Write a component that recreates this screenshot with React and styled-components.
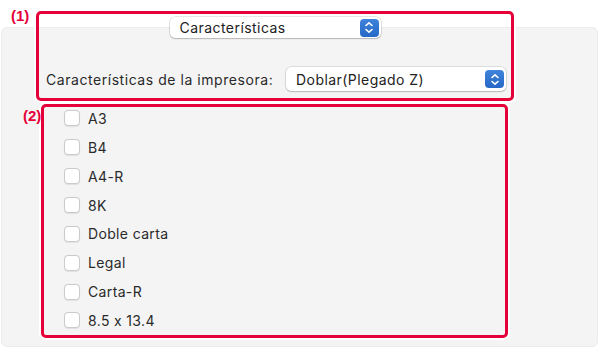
import styled, { createGlobalStyle } from 'styled-components';

const GlobalStyle = createGlobalStyle`
	html, body {
		margin: 0;
		padding: 0;
		background: #ffffff;
		font-family: Inter, "Liberation Sans", Arial, sans-serif;
		font-feature-settings: "calt" 0;
	}
`;

const sizes = ['A3', 'B4', 'A4-R', '8K', 'Doble carta', 'Legal', 'Carta-R', '8.5 x 13.4'];

const Stepper = () => (
	<StepperBox>
		<svg width='10' height='13' viewBox='0 0 10 13' fill='none'>
			<path
				d='M2 4.5 L5 1.8 L8 4.5 M2 8.5 L5 11.2 L8 8.5'
				stroke='#fff'
				strokeWidth='1.6'
				strokeLinecap='round'
				strokeLinejoin='round'
			/>
		</svg>
	</StepperBox>
);

const App = () => {
	return (
		<>
			<GlobalStyle />
			<Page>
				<Panel>
					<Callout $width={478} $height={90} $top={-17} $left={34}>
						<Tag $left={-28} $top={-7}>(1)</Tag>
						<TopRow>
							<PopUp $width={211}>
								<span>Características</span>
								<Stepper />
							</PopUp>
						</TopRow>
						<FieldRow>
							<FieldLabel>Características de la impresora:</FieldLabel>
							<PopUp $width={220} $height={24}>
								<span>Doblar(Plegado Z)</span>
								<Stepper />
							</PopUp>
						</FieldRow>
					</Callout>
					<Callout $width={467} $height={234} $top={3} $left={39}>
						<Tag $left={-21} $top={0}>(2)</Tag>
						<List>
							{sizes.map((s) => (
								<Row key={s}>
									<Box />
									<span>{s}</span>
								</Row>
							))}
						</List>
					</Callout>
				</Panel>
			</Page>
		</>
	);
};

export default App;

const Page = styled.div`
	width: 608px;
	height: 359px;
	padding-top: 27px;
	box-sizing: border-box;
	overflow: hidden;
`;

const Panel = styled.div`
	margin-left: 1px;
	width: 597px;
	height: 320px;
	box-sizing: border-box;
	background: #f4f4f4;
	border: 1px solid #ececec;
	border-radius: 6px;
`;

const Callout = styled.div`
	position: relative;
	box-sizing: border-box;
	width: ${(p) => p.$width}px;
	height: ${(p) => p.$height}px;
	margin-top: ${(p) => p.$top}px;
	margin-left: ${(p) => p.$left}px;
	border: 3px solid #e5003a;
	border-radius: 5px;
	box-shadow: 0 0 0 2px #ffffff;
`;

const Tag = styled.span`
	position: absolute;
	left: ${(p) => p.$left}px;
	top: ${(p) => p.$top}px;
	color: #e5003a;
	font-family: "Liberation Sans", Arial, sans-serif;
	font-weight: bold;
	font-size: 15px;
	line-height: 17px;
	white-space: nowrap;
`;

const TopRow = styled.div`
	display: flex;
	justify-content: center;
	padding-top: 3px;
`;

const FieldRow = styled.div`
	display: flex;
	align-items: center;
	justify-content: space-between;
	padding: 29px 5px 0 7px;
`;

const FieldLabel = styled.span`
	font-size: 14px;
	letter-spacing: 0.55px;
	color: #2a2a2a;
`;

const PopUp = styled.div`
	display: flex;
	align-items: center;
	justify-content: space-between;
	box-sizing: border-box;
	width: ${(p) => p.$width}px;
	height: ${(p) => p.$height || 21}px;
	padding: 0 2px 0 10px;
	background: #ffffff;
	border-radius: 5px;
	box-shadow: 0 0 0 0.5px rgba(0, 0, 0, 0.18), 0 1px 1.5px rgba(0, 0, 0, 0.18);
	font-size: 14px;
	letter-spacing: 0.45px;
	color: #222;
`;

const StepperBox = styled.div`
	display: flex;
	align-items: center;
	justify-content: center;
	width: 19px;
	height: 18px;
	border-radius: 4px;
	background: linear-gradient(#3f83dc, #2568c6);
`;

const List = styled.div`
	display: flex;
	flex-direction: column;
	padding: 0 0 0 20px;
	margin-top: -3px;
`;

const Row = styled.div`
	display: flex;
	align-items: center;
	gap: 8px;
	height: 28.86px;
	font-size: 14px;
	letter-spacing: 0.35px;
	color: #2a2a2a;
`;

const Box = styled.span`
	width: 16px;
	height: 16px;
	box-sizing: border-box;
	background: #ffffff;
	border: 1px solid #cbcbcb;
	border-radius: 4px;
	box-shadow: 0 0.5px 1px rgba(0, 0, 0, 0.08);
`;
